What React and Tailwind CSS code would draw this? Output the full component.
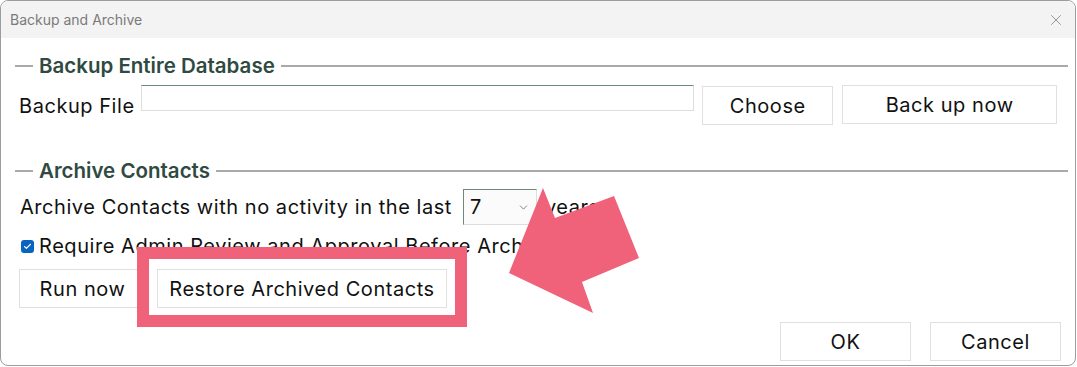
import { X, ChevronDown, Check } from 'lucide-react'

function SectionHeader({ title, className = '' }) {
  return (
    <div className={`flex items-center h-[28px] ${className}`}>
      <div className="w-[18px] h-[2px] bg-[#a9a9a9]" />
      <span className="px-[6px] text-[20.5px] font-semibold tracking-normal text-[#2f4a41] leading-none">{title}</span>
      <div className="flex-1 h-[2px] bg-[#a9a9a9]" />
    </div>
  )
}

function Btn({ children, className = '' }) {
  return (
    <div className={`h-[39px] flex items-center justify-center border border-[#e0e0e0] bg-white text-[20px] tracking-[0.55px] text-[#111] ${className}`}>
      {children}
    </div>
  )
}

export default function App() {
  return (
    <div className="w-[1077px] h-[367px] bg-white relative overflow-hidden font-['Inter',sans-serif]">
      <div className="w-[1076px] h-[366px] border border-[#9c9c9c] rounded-[8px] overflow-hidden flex flex-col">
        {/* Title bar */}
        <div className="h-[37px] bg-[#f3f3f3] flex items-center justify-between pl-[9px] pr-[10px]">
          <span className="text-[14px] text-[#7a7a7a]">Backup and Archive</span>
          <X size={18} strokeWidth={1} className="text-[#777]" />
        </div>

        {/* Body */}
        <div className="flex flex-col pl-[14px] pr-[7px] text-[20px] tracking-[0.55px] text-[#111]">
          <SectionHeader title="Backup Entire Database" className="mt-[14px]" />
          <div className="flex items-start mt-[5px] pr-[11px]">
            <span className="mt-[6px] ml-[4px] w-[122px]">Backup File</span>
            <div className="w-[554px] h-[26px] border border-[#ddd] border-t-[#6a8a7c] bg-white" />
            <Btn className="w-[131px] ml-[8px] mt-[1px]">Choose</Btn>
            <Btn className="w-[215px] ml-[9px]">Back up now</Btn>
          </div>

          <SectionHeader title="Archive Contacts" className="mt-[32px]" />
          <div className="flex items-center mt-[4px] h-[36px]">
            <span className="ml-[5px]">Archive Contacts with no activity in the last</span>
            <div className="ml-[11px] w-[74px] h-[36px] border border-[#ddd] border-t-[#6a8a7c] border-l-[#6a8a7c] bg-[#fbfbfb] flex items-center justify-between pl-[6px] pr-[6px]">
              <span>7</span>
              <ChevronDown size={13} strokeWidth={1.3} className="text-[#555]" />
            </div>
            <span className="ml-[8px]">years</span>
          </div>

          <div className="flex items-center mt-[9px] h-[24px] ml-[6px]">
            <div className="w-[13px] h-[13px] rounded-[3px] bg-[#0b63c1] flex items-center justify-center">
              <Check size={9} strokeWidth={3} className="text-white" />
            </div>
            <span className="ml-[5px]">Require Admin Review and Approval Before Archiving</span>
          </div>

          <div className="flex items-center mt-[11px] ml-[4px]">
            <Btn className="w-[127px]">Run now</Btn>
            <Btn className="w-[290px] ml-[11px]">Restore Archived Contacts</Btn>
          </div>

          <div className="flex justify-end mt-[14px] pr-[7px]">
            <Btn className="w-[131px]">OK</Btn>
            <Btn className="w-[131px] ml-[19px]">Cancel</Btn>
          </div>
        </div>
      </div>

      {/* Annotation: highlight box */}
      <div className="absolute left-[137px] top-[247px] w-[330px] h-[80px] border-[12px] border-[#f0627a]" />

      {/* Annotation: arrow */}
      <svg className="absolute left-0 top-0" width="1077" height="367" viewBox="0 0 1077 367">
        <polygon
          points="543,188 555,218 614,196 639,258 582,282 593,313 509,273"
          fill="#f0627a"
        />
      </svg>
    </div>
  )
}
